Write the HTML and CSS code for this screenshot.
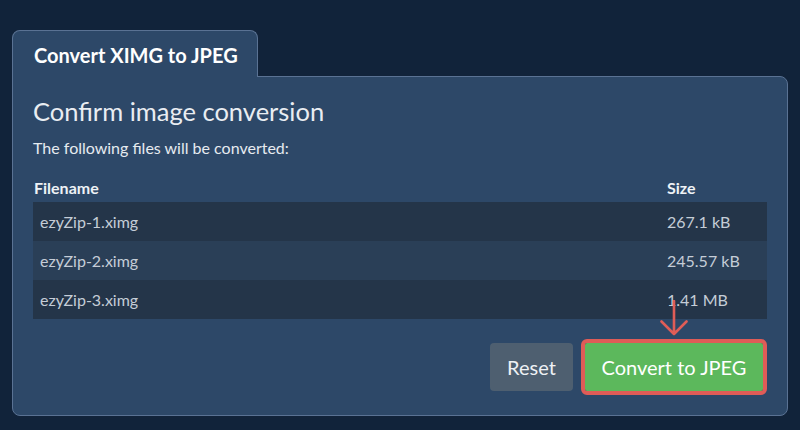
FILE: index.html
```html
<!DOCTYPE html>
<html lang="en">
<head>
<meta charset="utf-8">
<title>Convert XIMG to JPEG</title>
<link rel="stylesheet" href="styles.css">
</head>
<body>
<div class="page">
  <div class="tabs">
    <div class="tab">Convert XIMG to JPEG</div>
  </div>
  <div class="panel">
    <h1 class="title">Confirm image conversion</h1>
    <p class="subtitle">The following files will be converted:</p>
    <div class="table">
      <div class="head">
        <div class="th th-name">Filename</div>
        <div class="th th-size">Size</div>
      </div>
      <div class="row row-dark">
        <div class="td td-name">ezyZip-1.ximg</div>
        <div class="td td-size">267.1 kB</div>
      </div>
      <div class="row row-light">
        <div class="td td-name">ezyZip-2.ximg</div>
        <div class="td td-size">245.57 kB</div>
      </div>
      <div class="row row-dark">
        <div class="td td-name">ezyZip-3.ximg</div>
        <div class="td td-size">1.41 MB</div>
      </div>
    </div>
    <div class="actions">
      <button class="btn btn-reset">Reset</button>
      <div class="convert-wrap">
        <svg class="arrow" width="30" height="36" viewBox="0 0 30 36" aria-hidden="true">
          <path d="M15 1 V34 M2.5 21.5 L15 34 L27.5 21.5" fill="none" stroke="#e05d57" stroke-width="2.6" stroke-linecap="round" stroke-linejoin="round"/>
        </svg>
        <button class="btn btn-convert">Convert to JPEG</button>
      </div>
    </div>
  </div>
</div>
</body>
</html>
```

FILE: styles.css
```css
* { box-sizing: border-box; }
html, body {
  margin: 0;
  padding: 0;
  background: #11233a;
  font-family: Lato, "Open Sans", "Liberation Sans", sans-serif;
}
.page {
  padding: 30px 12px 15px 12px;
}
.tabs {
  display: flex;
}
.tab {
  width: 246px;
  height: 47px;
  padding: 12px 0 0 21px;
  background: #2d4868;
  border: 1px solid #5a7293;
  border-bottom: none;
  border-radius: 8px 8px 0 0;
  color: #ffffff;
  font-weight: 700;
  font-size: 20px;
  line-height: 24px;
  position: relative;
  z-index: 1;
  margin-bottom: -1px;
}
.panel {
  background: #2d4868;
  border: 1px solid #5a7293;
  border-radius: 0 8px 8px 8px;
  padding: 19px 20px 24px 20px;
}
.title {
  margin: 0;
  font-weight: 400;
  font-size: 25.5px;
  line-height: 31px;
  color: #e9edf2;
}
.subtitle {
  margin: 11px 0 0 0;
  font-size: 16px;
  line-height: 19px;
  color: #e6ebf0;
}
.table {
  margin-top: 21px;
}
.head, .row {
  display: grid;
  grid-template-columns: 1fr 100px;
}
.head {
  padding-bottom: 5px;
}
.th {
  font-weight: 700;
  font-size: 16px;
  line-height: 19px;
  color: #eef2f6;
}
.th-name { padding-left: 1px; }
.row {
  height: 39px;
  align-items: center;
}
.row-dark { background: #243549; }
.row-light { background: #2a3f57; }
.td {
  font-size: 16px;
  color: #c5cdd7;
}
.td-name { padding-left: 7px; }
.actions {
  margin-top: 24px;
  display: flex;
  justify-content: flex-end;
  gap: 12px;
}
.btn {
  height: 48px;
  border: none;
  border-radius: 4px;
  font-family: Lato, "Open Sans", "Liberation Sans", sans-serif;
  font-size: 20px;
  color: #ffffff;
  padding: 0;
}
.btn-reset {
  width: 83px;
  background: #4e5f70;
  color: #eef1f4;
}
.convert-wrap {
  position: relative;
  margin-right: 4px;
}
.btn-convert {
  width: 178px;
  background: #5cb85c;
  outline: 4px solid #df5c57;
  outline-offset: 0;
  border-radius: 2px;
}
.arrow {
  position: absolute;
  left: 74px;
  top: -43px;
}
```
